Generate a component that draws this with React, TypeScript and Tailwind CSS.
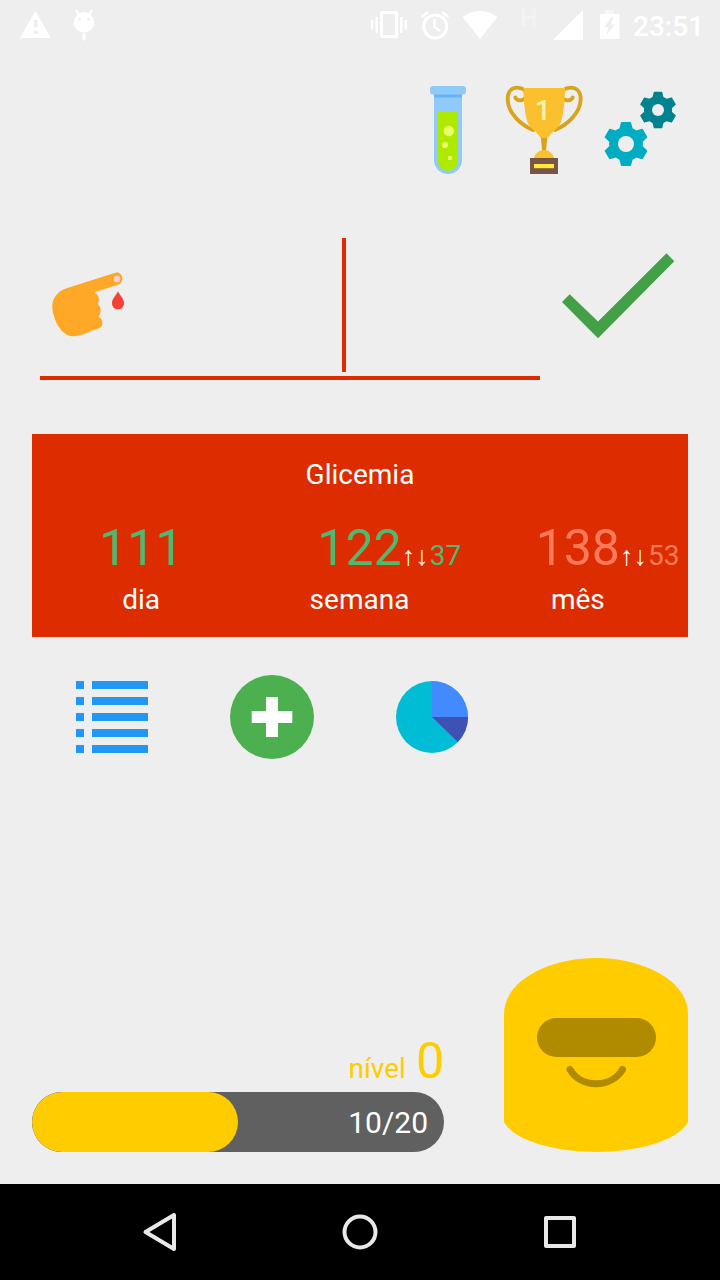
import React from "react";

type BoxProps = { box: string; className: string; children: React.ReactNode };

function Icon({ box, className, children }: BoxProps) {
  return (
    <svg viewBox={box} className={`block shrink-0 ${className}`} aria-hidden="true">
      {children}
    </svg>
  );
}

function StatusBar() {
  return (
    <header className="flex h-[50px] shrink-0 items-start text-white">
      <Icon box="0 0 110 50" className="h-[50px] w-[110px]">
        <path fill="#fff" fillRule="evenodd" d="M35.5 11L51 38H20zM34 20v7h3.5v-7zM34 30.500v3.500h3.500v-3.500z" />
        <path stroke="#fff" strokeWidth="2.200" strokeLinecap="round" d="M76.500 11l3 4M91.500 11l-3 4" />
        <circle cx="84" cy="22.300" r="10.200" fill="#fff" />
        <path stroke="#fff" strokeWidth="3.200" strokeLinecap="round" d="M84 34.500v4.500" />
        <circle cx="79.700" cy="19.300" r="1.200" fill="#ededed" />
        <circle cx="88.500" cy="19.300" r="1.200" fill="#ededed" />
      </Icon>
      <div className="flex-1" />
      <Icon box="365 0 145 50" className="h-[50px] w-[145px]">
        <rect x="381.500" y="12.500" width="15" height="24" rx="1.500" fill="none" stroke="#fff" strokeWidth="3.200" />
        <path stroke="#fff" strokeWidth="2.400" d="M376.700 17v16M372.200 20v9.500M401.300 17v16M405.800 20v9.500" />
        <circle cx="435.200" cy="26.500" r="11.500" fill="none" stroke="#fff" strokeWidth="3" />
        <path fill="none" stroke="#fff" strokeWidth="2.500" d="M434.500 19v8l6 4M421.800 17l6.400-5M448.500 17l-6.400-5" />
        <path fill="#fff" d="M480 39L462.500 17C472.500 9 487.500 9 497.500 17z" />
      </Icon>
      <span className="w-[32px] pl-[10px] pt-[5px] text-[25px] font-bold leading-[28px] text-[#f3f3f3]">H</span>
      <Icon box="542 0 91 50" className="h-[50px] w-[91px]">
        <path fill="#fff" d="M553 40L583 10V40z" />
        <path fill="#f6f6f6" d="M605 10h9v4h-9z" />
        <path fill="#fff" fillRule="evenodd" d="M600 14h19.500v25H600zM611.500 17l-7 10h4l-2 8 8.500-10.500h-4.500l3-7.500z" />
      </Icon>
      <span className="w-[87px] pt-[10px] text-[28px] font-medium leading-[33px]">23:51</span>
    </header>
  );
}

function TestTube() {
  return (
    <Icon box="430 86 36 88" className="h-[88px] w-[36px]">
      <path fill="#90caf9" d="M434 92h28v68a14 14 0 0 1-28 0z" />
      <path fill="#64b5f6" d="M434 93h28v4.500h-28z" />
      <rect x="430" y="86" width="36" height="8.500" rx="3" fill="#90caf9" />
      <path fill="#aeea00" d="M438 112h20v49a10 10 0 0 1-20 0z" />
      <g fill="#eaff6b">
        <circle cx="448.900" cy="131" r="5.200" />
        <circle cx="445" cy="145" r="3.100" />
        <circle cx="450" cy="158" r="2.200" />
      </g>
    </Icon>
  );
}

function Trophy() {
  return (
    <div className="relative h-[90px] w-[80px] shrink-0">
      <Icon box="504 85 80 90" className="h-[90px] w-[80px]">
        <g fill="none" stroke="#d9a41c" strokeWidth="3.800" strokeLinecap="round">
          <path d="M533 130C521 125 507.700 113 507.700 99C507.700 91 512 87.700 517.500 87.700C523 87.700 526.500 91 526.500 94.500C526.500 101 517.500 102 515.300 97.500" />
          <path d="M555 130C567 125 580.700 113 580.700 99C580.700 91 576 87.700 570.500 87.700C565 87.700 561.500 91 561.500 94.500C561.500 101 570.500 102 572.700 97.500" />
        </g>
        <path fill="#fbc02d" d="M523.500 88h41.500c0 14-1.500 26-4 34c-2 6-9.500 9.500-12.500 15.500h-8.500c-3-6-10.500-9.500-12.500-15.500c-2.500-8-4-20-4-34z" />
        <path fill="#d9a41c" d="M540.800 137.500h6.600l-1.500 14h-3.700z" />
        <path fill="#fbc02d" d="M534 158c1-4.500 5.500-8 10-8s9 3.500 10 8z" />
        <path fill="#795548" d="M530 158h28v16h-28z" />
        <path fill="#ffe838" d="M534 164h20v4.200h-20z" />
      </Icon>
      <span className="absolute left-[31px] top-[9px] text-[28px] font-medium leading-[34px] text-[#fff3a8]">1</span>
    </div>
  );
}

function Gear({ x, y, r, hole, color }: { x: number; y: number; r: number; hole: number; color: string }) {
  return (
    <g transform={`translate(${x} ${y})`} fill={color}>
      {[0, 60, 120, 180, 240, 300].map((a) => (
        <path key={a} transform={`rotate(${a}) scale(${r})`} d="M-.23-.98Q-.23-1-.2-1H.2Q.23-1 .23-.98L.3-.7H-.3z" />
      ))}
      <circle r={r * 0.77} />
      <circle r={hole} fill="#eeeeee" />
    </g>
  );
}

function Toolbar() {
  return (
    <nav className="flex h-[130px] shrink-0 items-start justify-end pr-[42px] pt-[35px]">
      <div className="pt-px">
        <TestTube />
      </div>
      <div className="ml-[38px]">
        <Trophy />
      </div>
      <Icon box="602 85 76 84" className="ml-[18px] h-[84px] w-[76px]">
        <Gear x={658} y={110} r={18.3} hole={6} color="#00838f" />
        <Gear x={626} y={144} r={22} hole={8} color="#00acc1" />
      </Icon>
    </nav>
  );
}

function EntryRow() {
  return (
    <section className="flex h-[254px] shrink-0 px-[40px] pt-[58px]">
      <div className="h-[142px] w-[500px] border-b-4 border-[#dd2c00]">
        <div className="flex h-[134px]">
          <div className="w-[306px] border-r-4 border-[#dd2c00] pl-[8px] pt-[30px]">
            <Icon box="48 268 84 72" className="h-[72px] w-[84px]">
              <g transform="translate(30 230) scale(.33333)">
                <path
                  fill="#ffa726"
                  d="M112 174L256 128C280 124 285 158 264 164L193 187C205 193 211 208 203 222C215 231 214 249 206 260C220 267 222 288 207 295C185 302 160 316 132 319C96 319 77 280 69 248C60 213 78 184 112 174z"
                />
                <circle cx="261" cy="147" r="10" fill="#ffcdd2" />
                <path fill="#f44336" d="M264 184C271 198 282 207 282 219C282 231 274 238 264 238S246 231 246 219C246 207 257 198 264 184z" />
              </g>
            </Icon>
          </div>
        </div>
      </div>
      <Icon box="560 238 118 110" className="ml-[20px] h-[110px] w-[118px]">
        <path fill="#43a047" d="M562 302L569.700 294.300L598 321.500L666.500 253.300L674.300 261.300L598 338.300z" />
      </Icon>
    </section>
  );
}

type Stat = { value: string; label: string; spread?: string; tone: string };

const stats: Stat[] = [
  { value: "111", label: "dia", tone: "text-[#4fba6f]" },
  { value: "122", label: "semana", spread: "37", tone: "text-[#4fba6f]" },
  { value: "138", label: "mês", spread: "53", tone: "text-[#ff7a5a]" },
];

function GlucoseCard() {
  return (
    <section className="mx-[32px] h-[203px] shrink-0 bg-[#dd2c00] pt-[24px] text-white">
      <h1 className="text-center text-[28px] font-normal leading-[33px]">Glicemia</h1>
      <div className="mr-px mt-[24px] grid grid-cols-3">
        {stats.map((s) => (
          <div key={s.label} className="flex flex-col items-center">
            <div className={`flex h-[67px] items-baseline text-[50px] leading-[66px] ${s.tone}`}>
              <span>{s.value}</span>
              {s.spread && (
                <span className="flex w-0 items-baseline whitespace-nowrap text-[28px]">
                  <span className="w-[28px] shrink-0 font-['Liberation_Sans',sans-serif] text-[27px] text-white">↑↓</span>
                  <span>{s.spread}</span>
                </span>
              )}
            </div>
            <span className="text-[28px] leading-[36px]">{s.label}</span>
          </div>
        ))}
      </div>
    </section>
  );
}

function Actions() {
  return (
    <section className="flex h-[160px] shrink-0 items-center pl-[76px]">
      <Icon box="0 0 72 72" className="h-[72px] w-[72px]">
        {[0, 16, 32, 48, 64].map((y) => (
          <path key={y} fill="#2196f3" d={`M0 ${y}h8v8h-8zM16 ${y}h56v8h-56z`} />
        ))}
      </Icon>
      <Icon box="0 0 84 84" className="ml-[82px] h-[84px] w-[84px]">
        <circle cx="42" cy="42" r="42" fill="#4caf50" />
        <path fill="#fff" d="M36 22h12v14h14.300v12H48v14H36V48H21.700V36H36z" />
      </Icon>
      <Icon box="-36 -36 72 72" className="ml-[82px] h-[72px] w-[72px]">
        <circle r="36" fill="#00bcd4" />
        <path fill="#448aff" d="M0 0V-36A36 36 0 0 1 36 0z" />
        <path fill="#3f51b5" d="M0 0H36A36 36 0 0 1 25.800 25z" />
      </Icon>
    </section>
  );
}

function Level({ points, goal }: { points: number; goal: number }) {
  return (
    <section className="mt-auto flex shrink-0 items-end justify-between px-[32px] pb-[32px]">
      <div className="w-[412px]">
        <div className="flex h-[62px] items-baseline justify-end text-[#ffcc00]">
          <span className="text-[28px] leading-[63px]">nível</span>
          <span className="ml-[10px] text-[50px] leading-[63px]">0</span>
        </div>
        <div className="flex h-[60px] overflow-hidden rounded-full bg-[#606060]">
          <div className="rounded-full bg-[#ffcc00]" style={{ width: `${(points / goal) * 100}%` }} />
          <div className="flex-1 pr-[16px] pt-px text-right text-[30px] leading-[60px] text-white">
            {points}/{goal}
          </div>
        </div>
      </div>
      <Icon box="504 958 184 194" className="h-[194px] w-[184px]">
        <path
          fill="#ffcc00"
          d="M504 1014C504 980 550 958 596 958S688 980 688 1014V1122C678 1141 636 1152 596 1152S514 1141 504 1122z"
        />
        <rect x="537" y="1018" width="119" height="39" rx="19.500" fill="#b08b00" />
        <path fill="none" stroke="#b08b00" strokeWidth="7" strokeLinecap="round" d="M570 1069.500C581 1088.500 611 1088.500 622.500 1069.500" />
      </Icon>
    </section>
  );
}

function NavBar() {
  return (
    <footer className="flex h-[96px] shrink-0 items-center justify-between bg-black px-[140px]">
      <Icon box="140 1212 40 40" className="h-[40px] w-[40px]">
        <path fill="none" stroke="#e9e9e9" strokeWidth="4" strokeLinejoin="round" d="M145.500 1232L174 1215V1249z" />
      </Icon>
      <Icon box="0 0 40 40" className="h-[40px] w-[40px]">
        <circle cx="20" cy="20" r="15.500" fill="none" stroke="#e9e9e9" strokeWidth="4" />
      </Icon>
      <Icon box="0 0 40 40" className="h-[40px] w-[40px]">
        <rect x="6" y="6" width="28" height="28" fill="none" stroke="#e9e9e9" strokeWidth="4" strokeLinejoin="round" />
      </Icon>
    </footer>
  );
}

export default function App() {
  return (
    <div className="flex h-[1280px] w-[720px] flex-col overflow-hidden bg-[#eeeeee] font-['Roboto',sans-serif]">
      <StatusBar />
      <Toolbar />
      <EntryRow />
      <GlucoseCard />
      <Actions />
      <Level points={10} goal={20} />
      <NavBar />
    </div>
  );
}
